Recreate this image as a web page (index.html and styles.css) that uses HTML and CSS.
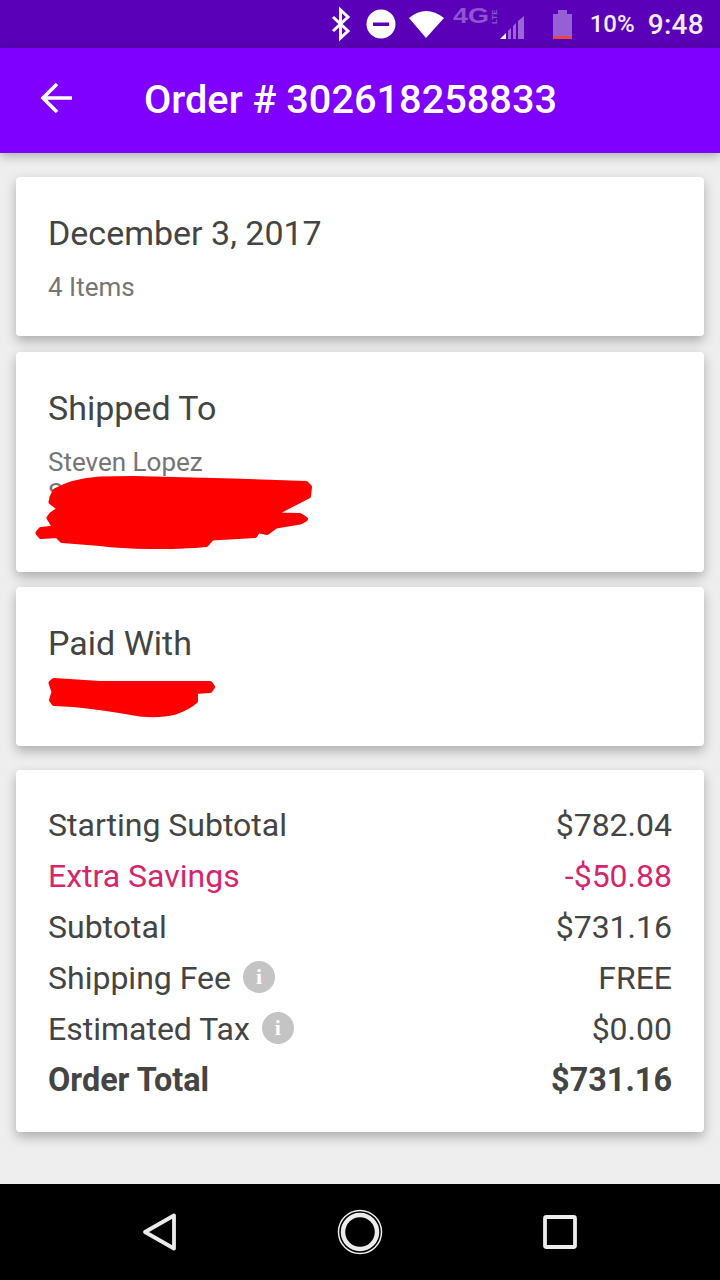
FILE: index.html
```html
<!DOCTYPE html>
<html lang="en">
<head>
<meta charset="utf-8">
<title>Order # 302618258833</title>
<link rel="stylesheet" href="styles.css">
</head>
<body>
<div class="screen">
  <header class="status">
    <svg class="status-icons" viewBox="330 0 244 48" width="244" height="48">
      <path class="bt" d="M333 17 L348 31 L340.500 38 L340.500 10 L348 17 L333 31"/>
      <circle cx="381" cy="24" r="14.500" fill="#fff"/>
      <rect x="373" y="22.500" width="16" height="3.500" fill="#5a00b8"/>
      <path d="M409 18 Q426 4 444 18 L426 38 Z" fill="#fff"/>
      <text class="net" x="453" y="23" textLength="36" lengthAdjust="spacingAndGlyphs">4G</text>
      <text class="lte" transform="translate(497 24) rotate(-90)">LTE</text>
      <path d="M500 39 L506 33 V39 Z" fill="#fff"/>
      <path d="M508 39 V31 L511 28 V39 Z M513 39 V26 L516 23 V39 Z M518 39 V21 L524 16 V39 Z" fill="#9c66d9"/>
      <path d="M553 14 H558 V10 H567 V14 H572 V36 H553 Z" fill="#9460d4"/>
      <rect x="553" y="36" width="19" height="3" fill="#e8473f"/>
    </svg>
    <span class="pct">10%</span>
    <span class="time">9:48</span>
  </header>

  <div class="appbar">
    <svg class="arrow" viewBox="0 0 34 34" width="34" height="34">
      <path d="M32 17 H3 M17 3 L3 17 L17 31"/>
    </svg>
    <h1 class="title">Order # 302618258833</h1>
  </div>

  <main class="content">
    <section class="card">
      <h2 class="card-title">December 3, 2017</h2>
      <p class="sub">4 Items</p>
    </section>

    <section class="card card-ship">
      <h2 class="card-title">Shipped To</h2>
      <p class="sub">Steven Lopez</p>
      <p class="address">S</p>
      <svg class="scribble" viewBox="16 352 688 220">
        <path d="M55 491 Q72 481 100 479 L133 478.500 L233 481 L306 483.500 L309.500 487 L308.500 496 L291 505 L272 515 L300 515.500 L305.500 519 L300 522 L276 526 L267 532.500 L258 530.500 L255 535.500 L212 538 L206 544.500 Q180 547 150 546.500 Q120 546 100 543.500 L62 540.500 L57 535.500 L41 536.500 L38 533 L41 529.500 L55 528 L49 518 L52 514 L60 509 L51 502 L53 495 Z"/>
      </svg>
    </section>

    <section class="card card-paid">
      <h2 class="card-title">Paid With</h2>
      <p class="sub"></p>
      <svg class="scribble" viewBox="16 587 688 159">
        <path d="M51 683 L54 680.500 L100 683.500 L210 683.500 L212.500 687 L210 690.500 L195.500 691.500 L195.500 701 Q188 708 175 712 Q160 716 140 714 Q100 707 73 704.500 L54 703.500 L51.500 700 L54 692 Z"/>
      </svg>
    </section>

    <section class="card card-totals">
      <div class="row"><span>Starting Subtotal</span><span>$782.04</span></div>
      <div class="row row-savings"><span>Extra Savings</span><span>-$50.88</span></div>
      <div class="row"><span>Subtotal</span><span>$731.16</span></div>
      <div class="row"><span class="label">Shipping Fee<i class="info">i</i></span><span>FREE</span></div>
      <div class="row"><span class="label">Estimated Tax<i class="info">i</i></span><span>$0.00</span></div>
      <div class="row row-total"><span>Order Total</span><span>$731.16</span></div>
    </section>
  </main>

  <nav class="navbar">
    <svg class="nav-icon" viewBox="0 0 48 48" width="48" height="48">
      <path d="M9 24 L38 7.500 V40.500 Z"/>
    </svg>
    <svg class="nav-icon" viewBox="0 0 48 48" width="48" height="48">
      <circle class="ring-thin" cx="24" cy="24" r="21.500"/>
      <circle class="ring" cx="24" cy="24" r="17"/>
    </svg>
    <svg class="nav-icon" viewBox="0 0 48 48" width="48" height="48">
      <rect x="9" y="9" width="30" height="30" rx="1.500"/>
    </svg>
  </nav>
</div>
</body>
</html>
```

FILE: styles.css
```css
* { box-sizing: border-box; }

html, body {
  margin: 0;
  padding: 0;
}

body {
  font-family: Roboto, "Liberation Sans", sans-serif;
  background: #eeeeee;
  color: #444444;
}

.screen {
  width: 720px;
  height: 1280px;
  display: flex;
  flex-direction: column;
  overflow: hidden;
}

.status {
  height: 48px;
  flex: none;
  background: #5a00b8;
  color: #f4ecff;
  display: flex;
  align-items: center;
  justify-content: flex-end;
  padding-right: 16px;
  font-weight: 500;
}

.status-icons { margin-right: 16px; flex: none; }

.bt {
  fill: none;
  stroke: #fff;
  stroke-width: 3;
}

.net {
  font-family: "Liberation Sans", sans-serif;
  font-weight: 700;
  font-size: 22px;
  fill: #8f55d0;
}

.lte {
  font-family: "Liberation Sans", sans-serif;
  font-weight: 700;
  font-size: 8px;
  fill: #8f55d0;
}

.pct { font-size: 24px; margin-right: 13px; }
.time { font-size: 28px; letter-spacing: 0.3px; }

.appbar {
  height: 105px;
  flex: none;
  background: #8000ff;
  color: #fff;
  display: flex;
  align-items: center;
  padding: 0 0 0 40px;
  box-shadow: 0 3px 10px rgba(0, 0, 0, 0.28);
  position: relative;
  z-index: 1;
}

.arrow {
  flex: none;
  fill: none;
  stroke: #fff;
  stroke-width: 3.600;
  margin: 0 71px 6px 0;
}

.title {
  margin: 0 0 2px -1px;
  font-size: 39.700px;
  font-weight: 500;
  line-height: 48px;
  white-space: nowrap;
}

.content {
  flex: 1;
  padding: 24px 16px 0;
  display: flex;
  flex-direction: column;
}

.card {
  position: relative;
  background: #fff;
  border-radius: 4px;
  padding: 32px 32px 31px;
  margin-bottom: 16px;
  box-shadow: 0 5px 12px rgba(0, 0, 0, 0.28);
}

.card-title {
  margin: 0 0 12px;
  font-size: 34px;
  font-weight: 400;
  line-height: 48px;
  color: #444444;
}

.sub {
  margin: 0;
  font-size: 26px;
  line-height: 36px;
  min-height: 36px;
  color: #757575;
}

.address {
  margin: 0;
  min-height: 61px;
  font-size: 26px;
  line-height: 26px;
  color: #757575;
}

.card-ship { margin-bottom: 15px; }
.card-paid { margin-bottom: 24px; }

.scribble {
  position: absolute;
  left: 0;
  top: 0;
  width: 100%;
  height: 100%;
  fill: #ff0000;
  stroke: #ff0000;
  stroke-width: 5;
  stroke-linejoin: round;
}

.card-totals { padding: 29px 32px 27px; margin-bottom: 0; }

.row {
  display: flex;
  justify-content: space-between;
  align-items: center;
  height: 51px;
  font-size: 32px;
  color: #444444;
}

.row-savings { color: #d4266c; }
.row-total { font-weight: 700; font-size: 32.400px; }

.label { display: flex; align-items: center; }

.info {
  width: 32px;
  height: 32px;
  margin-left: 12px;
  margin-top: -2px;
  border-radius: 50%;
  background: #c4c4c4;
  color: #fff;
  font-family: "Liberation Serif", serif;
  font-style: normal;
  font-weight: 700;
  font-size: 22px;
  line-height: 32px;
  text-align: center;
}

.navbar {
  height: 96px;
  flex: none;
  background: #000;
  display: grid;
  grid-template-columns: repeat(3, 200px);
  padding: 0 60px;
  align-items: center;
  justify-items: center;
}

.nav-icon {
  fill: none;
  stroke: #ececec;
  stroke-width: 3.800;
  stroke-linejoin: round;
}

.ring-thin { stroke-width: 1.500; }
.ring { stroke-width: 4.500; }
```
